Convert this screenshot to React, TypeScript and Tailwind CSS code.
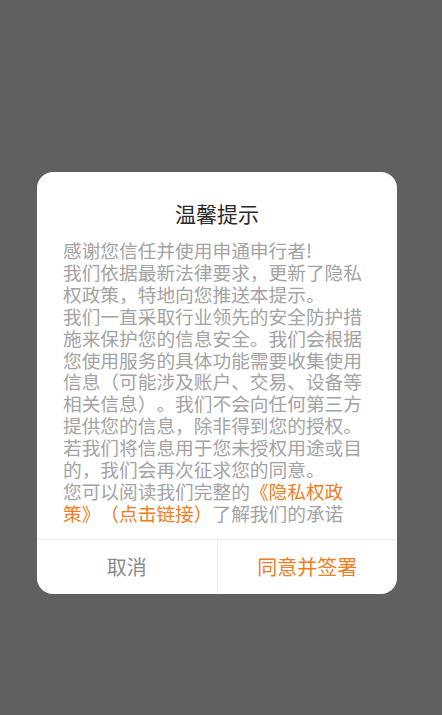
import React from "react";

const FONT = { fontFamily: '"Noto Sans CJK SC", "Noto Sans", sans-serif' };

export default function App() {
  return (
    <div
      className="flex h-[715px] w-full items-start bg-[#606060] pl-[37px] pt-[172px]"
      style={FONT}
    >
      <div className="flex w-[360px] flex-col overflow-hidden rounded-[16px] bg-white">
        {/* ── Title ── */}
        <h1 className="pt-[29px] text-center text-[21px] leading-[24px] text-[#2a2a2a]">
          温馨提示
        </h1>

        {/* ── Body ── */}
        <div className="mx-[26px] mt-[14px] mb-[15px] w-[306px] text-[18.7px] leading-[21.9px] text-[#a3a3a3] [text-spacing-trim:space-all]">
          <p>感谢您信任并使用申通申行者!</p>
          <p>我们依据最新法律要求，更新了隐私权政策，特地向您推送本提示。</p>
          <p>
            我们一直采取行业领先的安全防护措施来保护您的信息安全。我们会根据您使用服务的具体功能需要收集使用信息（可能涉及账户、交易、设备等相关信息）。我们不会向任何第三方提供您的信息，除非得到您的授权。若我们将信息用于您未授权用途或目的，我们会再次征求您的同意。
          </p>
          <p>
            您可以阅读我们完整的
            <span className="text-[#ef7d22]">《隐私权政策》（点击链接）</span>
            了解我们的承诺
          </p>
        </div>

        {/* ── Buttons ── */}
        <div className="flex h-[55px] border-t border-[#ececf0]">
          <button className="flex-1 text-[20px] text-[#8a8a8a]">取消</button>
          <div className="w-px bg-[#ececf0]" />
          <button className="flex-1 text-[20px] text-[#ef7d22]">同意并签署</button>
        </div>
      </div>
    </div>
  );
}
